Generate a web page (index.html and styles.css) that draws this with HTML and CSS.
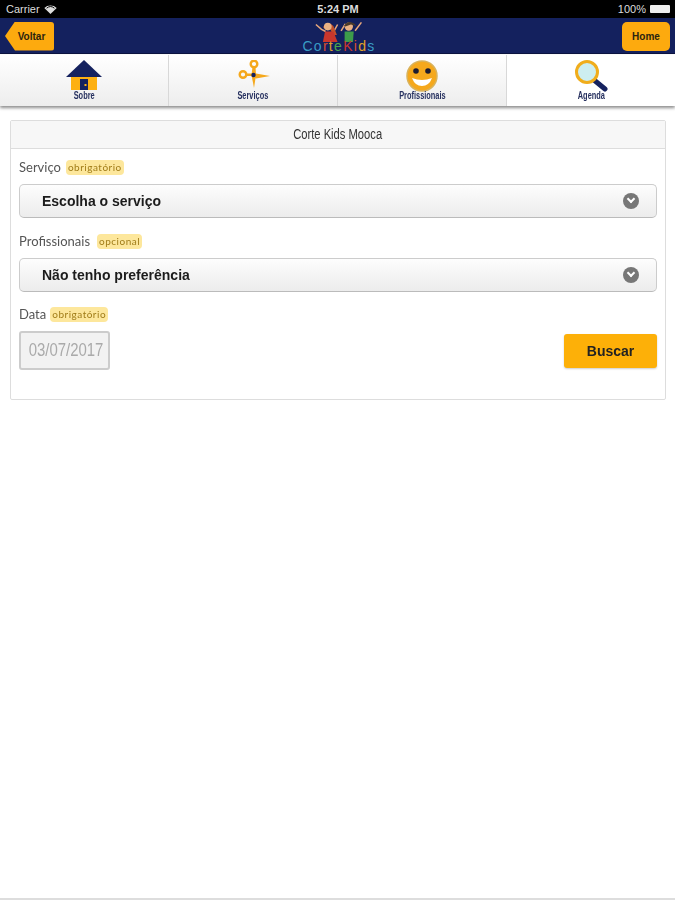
FILE: index.html
```html
<!doctype html>
<html lang="pt-BR">
  <head>
    <meta charset="UTF-8" />
    <meta name="viewport" content="width=device-width, initial-scale=1.0" />
    <title>Corte Kids Mooca</title>
    <link rel="stylesheet" href="styles.css">
  </head>
  <body>
    <div class="page">
      <div class="status-bar">
        <div class="status-left">
          Carrier
          <svg class="wifi" width="13" height="9" viewBox="0 0 13 9">
            <path d="M6.5 9 0.3 3A9 9 0 0 1 12.7 3Z" fill="#ddd" />
            <path d="M2.6 3.2a6 6 0 0 1 7.8 0" fill="none" stroke="#000" stroke-width="1" />
          </svg>
        </div>
        <div class="status-time">5:24 PM</div>
        <div class="status-right">
          100%
          <span class="battery"></span>
        </div>
      </div>

      <div class="nav-bar">
        <a class="back-btn">Voltar</a>
        <div class="logo">
          <svg class="logo-kids" width="70" height="30" viewBox="0 0 70 30">
            <path d="M2 5 10 12 16 15M33 5 28 14M38 14 44 4M67 2 58 14" stroke="#e8a77c" stroke-width="2.200" fill="none" />
            <path d="M12 9Q19 -1 27 7L32 20 26 20 22 10 17 12Z" fill="#c4502a" />
            <circle cx="19" cy="8" r="5.500" fill="#eab183" />
            <path d="M15 15H27L33 30H12Z" fill="#c9362c" />
            <circle cx="49" cy="8" r="6" fill="#eab183" />
            <path d="M42 7Q48 -2 57 4L60 7 52 5 44 8Z" fill="#4a3a2a" />
            <path d="M43 15H56L55 30H43Z" fill="#3d9c4a" />
          </svg>
          <span class="logo-text"><span class="c1">Co</span><span class="c2">r</span><span class="c3">t</span><span class="c4">e</span><span class="c5">K</span><span class="c2">i</span><span class="c3">d</span><span class="c1">s</span></span>
        </div>
        <a class="home-btn">Home</a>
      </div>

      <div class="tabs">
        <div class="tab">
          <svg width="38" height="32" viewBox="0 0 38 32">
            <rect x="6" y="15" width="26" height="15" fill="#fdb012" />
            <path d="M1 17 19 0 37 17Z" fill="#15225f" />
            <rect x="15" y="19" width="8" height="11" fill="#15225f" />
            <rect x="19.500" y="24" width="2" height="2" fill="#fdb012" />
          </svg>
          <span>Sobre</span>
        </div>
        <div class="tab">
          <svg width="34" height="32" viewBox="0 0 34 32">
            <g fill="none" stroke="#f5a81c" stroke-width="2.400">
              <circle cx="18" cy="4" r="3.300" />
              <circle cx="7" cy="14.500" r="3.300" />
            </g>
            <path d="M16.500 7H19.500L20 15 18 28 15.500 15Z" fill="#f5a81c" />
            <path d="M10 13.500H20L34 16 20 18.500 15 16H10Z" fill="#f5a81c" />
            <circle cx="17.500" cy="15" r="2.200" fill="#15225f" />
          </svg>
          <span>Serviços</span>
        </div>
        <div class="tab">
          <svg width="32" height="32" viewBox="0 0 32 32">
            <circle cx="16" cy="16" r="15" fill="#f5a81c" stroke="#d9b25a" stroke-width="1.500" />
            <circle cx="10" cy="11" r="2.800" fill="#1b1b30" />
            <circle cx="22" cy="11" r="2.800" fill="#1b1b30" />
            <path d="M6 18Q16 22 26 18Q23 26 16 26Q9 26 6 18Z" fill="#fff" />
          </svg>
          <span>Profissionais</span>
        </div>
        <div class="tab tab-active">
          <svg width="34" height="32" viewBox="0 0 34 32">
            <path d="M20 20 31 29" stroke="#15225f" stroke-width="5" stroke-linecap="round" />
            <circle cx="13" cy="12" r="10.500" fill="#cdeef0" stroke="#f0ad1c" stroke-width="3" />
          </svg>
          <span>Agenda</span>
        </div>
      </div>

      <div class="panel">
        <div class="panel-title"><span>Corte Kids Mooca</span></div>
        <div class="panel-body">
          <div class="field-label">Serviço <span class="tag">obrigatório</span></div>
          <div class="select">
            <span>Escolha o serviço</span>
            <span class="select-arrow"></span>
          </div>
          <div class="field-label">Profissionais <span class="tag tag-gap">opcional</span></div>
          <div class="select">
            <span>Não tenho preferência</span>
            <span class="select-arrow"></span>
          </div>
          <div class="field-label label-date">Data <span class="tag">obrigatório</span></div>
          <div class="search-row">
            <div class="date-input"><span>03/07/2017</span></div>
            <button class="search-btn">Buscar</button>
          </div>
        </div>
      </div>
    </div>
  </body>
</html>
```

FILE: styles.css
```css
html,
body {
  margin: 0;
  padding: 0;
  background: #fff;
}
body {
  font-family: "Liberation Sans", Arial, sans-serif;
  color: #222;
}
.page {
  box-sizing: border-box;
  height: 900px;
  overflow: hidden;
  border-bottom: 2px solid #ddd;
  filter: blur(0.5px);
}

/* status bar */
.status-bar {
  height: 18px;
  background: #000;
  color: #ddd;
  font-size: 11px;
  display: flex;
  align-items: center;
  justify-content: space-between;
  padding: 0 5px 0 6px;
  box-sizing: border-box;
}
.status-left,
.status-right {
  width: 120px;
  display: flex;
  align-items: center;
  gap: 4px;
}
.status-right {
  justify-content: flex-end;
}
.status-time {
  font-weight: bold;
}
.battery {
  display: block;
  width: 20px;
  height: 8px;
  background: #eee;
  border-radius: 1px;
}

/* top nav */
.nav-bar {
  height: 36px;
  background: #14215e;
  border-bottom: 1px solid #0c1440;
  box-sizing: border-box;
  display: flex;
  align-items: center;
  justify-content: space-between;
  padding: 3px 5px 2px;
}
.back-btn,
.home-btn {
  display: flex;
  align-items: center;
  justify-content: center;
  height: 29px;
  background: #fdaa0e;
  font-size: 10px;
  font-weight: bold;
  color: #2b2410;
}
.back-btn {
  width: 49px;
  padding-left: 4px;
  box-sizing: border-box;
  clip-path: polygon(10px 0, 100% 0, 100% 100%, 10px 100%, 0 50%);
  border-radius: 3px;
}
.home-btn {
  width: 48px;
  border-radius: 5px;
}
.logo {
  display: flex;
  flex-direction: column;
  align-items: center;
  align-self: flex-start;
  height: 35px;
  width: 72px;
  margin-top: -3px;
  margin-left: 2px;
}
.logo-kids {
  flex: none;
  height: 21px;
  margin-top: 3px;
  margin-bottom: -3px;
}
.logo-text {
  font-size: 14px;
  letter-spacing: 1.300px;
  line-height: 14px;
  white-space: nowrap;
  position: relative;
}
.c1 { color: #3a9cc4; }
.c2 { color: #d9502f; }
.c3 { color: #e0a226; }
.c4 { color: #4ca64c; }
.c5 { color: #c9362c; }

/* tabs */
.tabs {
  display: flex;
  height: 51px;
  margin-top: 1px;
  box-shadow: 0 2px 3px rgba(0, 0, 0, 0.45);
}
.tab {
  flex: 1;
  display: flex;
  flex-direction: column;
  align-items: center;
  padding-top: 5px;
  box-sizing: border-box;
  background: linear-gradient(#fff, #ededed);
  border-right: 1px solid #d8d8d8;
  font-size: 10px;
  font-weight: bold;
  color: #26305f;
}
.tab svg {
  flex: none;
}
.tab span {
  display: block;
  line-height: 10px;
  margin-top: -1px;
  white-space: nowrap;
  transform: scaleX(0.74);
}
.tab-active {
  background: #fff;
  border-right: 0;
}

/* form panel */
.panel {
  margin: 14px 9px 0 10px;
  height: 280px;
  box-sizing: border-box;
  border: 1px solid #ddd;
  border-radius: 2px;
}
.panel-title {
  height: 28px;
  line-height: 26px;
  box-sizing: border-box;
  text-align: center;
  background: #f7f7f7;
  border-bottom: 1px solid #ddd;
  font-size: 14px;
  color: #333;
}
.panel-title span {
  display: inline-block;
  transform: scaleX(0.8);
}
.panel-body {
  padding: 10px 8px 0;
}
.field-label {
  font-family: Lato, "Liberation Sans", sans-serif;
  font-size: 13px;
  height: 25px;
  line-height: 16px;
  color: #555;
  display: flex;
  align-items: flex-start;
  gap: 5px;
}
.label-date {
  margin-top: -1px;
  height: 26px;
  gap: 4px;
}
.tag {
  background: #fde79c;
  color: #a07c18;
  font-size: 10px;
  letter-spacing: 0.5px;
  line-height: 15px;
  height: 15px;
  padding: 0 2px;
  border-radius: 4px;
  margin-top: 1px;
}
.tag-gap {
  margin-left: 2px;
}
.select {
  height: 34px;
  box-sizing: border-box;
  margin-bottom: 15px;
  padding: 0 17px 0 22px;
  display: flex;
  align-items: center;
  justify-content: space-between;
  border: 1px solid #ccc;
  border-bottom-color: #bbb;
  border-radius: 5px;
  background: linear-gradient(#fdfdfd, #ececec);
  font-size: 14px;
  font-weight: bold;
  color: #1c1c1c;
}
.select-arrow {
  position: relative;
  width: 16px;
  height: 16px;
  border-radius: 50%;
  background: #777;
}
.select-arrow::after {
  content: "";
  position: absolute;
  left: 5px;
  top: 3px;
  width: 4px;
  height: 4px;
  border: solid #fff;
  border-width: 0 2px 2px 0;
  transform: rotate(45deg);
}
.search-row {
  display: flex;
  justify-content: space-between;
  align-items: center;
  margin-top: -1px;
}
.date-input {
  width: 91px;
  height: 39px;
  line-height: 35px;
  box-sizing: border-box;
  text-align: center;
  border: 2px solid #ccc;
  border-radius: 3px;
  background: #f2f2f2;
  font-size: 18px;
  color: #aaa;
  white-space: nowrap;
}
.date-input span {
  display: inline-block;
  transform: scaleX(0.83);
}
.search-btn {
  width: 93px;
  height: 34px;
  border: 0;
  border-radius: 3px;
  background: #fdb008;
  box-shadow: 0 1px 2px rgba(0, 0, 0, 0.2);
  font-family: "Liberation Sans", sans-serif;
  font-size: 14px;
  font-weight: bold;
  color: #222;
}
```
